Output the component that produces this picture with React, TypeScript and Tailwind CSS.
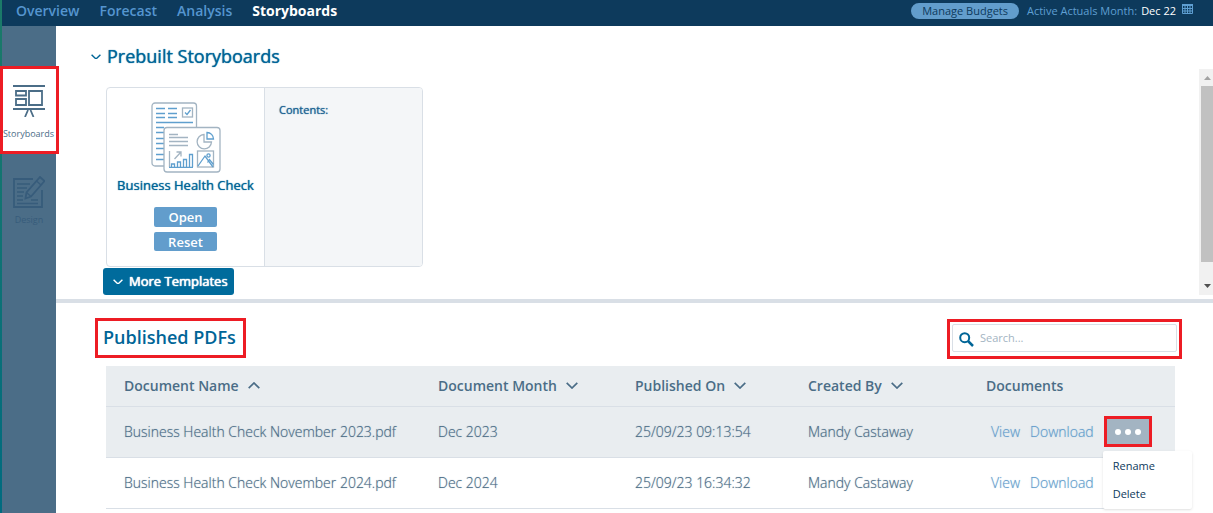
import type { ReactNode } from 'react'

const navItems = ['Overview', 'Forecast', 'Analysis', 'Storyboards']

const columns = [
  { label: 'Document Name', width: 'w-[314px]', sort: 'up' },
  { label: 'Document Month', width: 'w-[197px]', sort: 'down' },
  { label: 'Published On', width: 'w-[173px]', sort: 'down' },
  { label: 'Created By', width: 'w-[178px]', sort: 'down' },
  { label: 'Documents', width: '', sort: '' },
]

const documents = [
  { name: 'Business Health Check November 2023.pdf', month: 'Dec 2023', published: '25/09/23 09:13:54', author: 'Mandy Castaway', menuOpen: true },
  { name: 'Business Health Check November 2024.pdf', month: 'Dec 2024', published: '25/09/23 16:34:32', author: 'Mandy Castaway', menuOpen: false },
]

function Chevron({ up = false, className = '' }: { up?: boolean; className?: string }) {
  return (
    <svg viewBox="0 0 12 7" className={className} fill="none" stroke="currentColor" strokeWidth="1.7" aria-hidden="true">
      <path d={up ? 'M.7 6.2 6 1l5.3 5.2' : 'M.7.8 6 6 11.3.8'} />
    </svg>
  )
}

function Highlight({ children, className = '' }: { children: ReactNode; className?: string }) {
  return <div className={`border-3 border-[#ed1c24] ${className}`}>{children}</div>
}

function BoardIcon() {
  return (
    <svg width="32" height="32" viewBox="0 0 32 32" fill="none" stroke="#4b6d87" strokeWidth="1.8" aria-hidden="true">
      <path d="M0 1h32M0 24h32" strokeWidth="2" />
      <path d="M3 6h10v4.500H3zM3 14h10v6H3zM16 6h13v14H16z" />
      <path d="M15 25 12 32M17.500 25l3 7" />
    </svg>
  )
}

function DesignIcon() {
  return (
    <svg width="32" height="32" viewBox="0 0 32 32" fill="none" stroke="currentColor" strokeWidth="1.8" aria-hidden="true">
      <path d="M20 3H1v28h28V14" />
      <path d="M4 8h13M4 12h10M4 16h7M4 20h6M4 24h6M18 24h7M4 27.500h21" strokeWidth="1.5" />
      <path d="m12.500 22.500 1-6L27 1l4.500 4L18 20.500z" />
      <path d="m23.500 5 4.500 4M13.500 16.500l4.500 4" strokeWidth="1.3" />
    </svg>
  )
}

function ReportIcon() {
  return (
    <svg width="70" height="71" viewBox="0 0 70 71" fill="none" stroke="#a3b4c2" strokeWidth="1.3" aria-hidden="true">
      <rect x="1" y="1" width="44.500" height="63" rx="3" fill="#fff" />
      <path d="M5 6.500h9M17 6.500h9M5 11.500h9M17 11.500h9M5 15.500h9M17 15.500h9M5 20.500h37M5 25.500h8M5 30.500h8M5 36.500h8M5 41.500h8M5 46.500h8M5 52.500h8M5 57.500h8" stroke="#5f9fce" />
      <rect x="31.500" y="6" width="10" height="9" />
      <path d="m34 10.500 2 2L39.500 8" stroke="#5f9fce" />
      <rect x="13" y="25.500" width="56" height="44.500" rx="3" fill="#fff" />
      <path d="M18 32.500h9M18 35.500h19M18 39.500h19M18 43.500h19" />
      <path d="M53 32.500a7.200 7.200 0 1 0 7.500 7.500H53z" />
      <path d="M56 30.500v6.500h6.500a6.500 6.500 0 0 0-6.500-6.500z" stroke="#5f9fce" />
      <path d="M18.500 49v16M23.500 57l6-6.500M25.500 50h4.500v4.500" />
      <path d="M20.500 65v-3h3v3M26.500 65v-5h3v5M32.500 65v-7.500h3V65M38.500 65V52.500h3V65M18 65.300h24" stroke="#5f9fce" />
      <rect x="46.500" y="49" width="16" height="16" />
      <path d="m47 64 7-10 8 11M56.500 60.500l2-3 4 5" stroke="#5f9fce" />
      <circle cx="57.500" cy="53.500" r="1.600" stroke="#5f9fce" />
    </svg>
  )
}

function Header() {
  return (
    <header className="flex h-[26px] shrink-0 items-start justify-between bg-[#0d3a5c] pr-5 pl-3.5">
      <nav className="flex gap-5 text-sm leading-[22px] font-semibold">
        {navItems.map(item => (
          <a key={item} href="#" className={item === 'Storyboards' ? 'font-bold text-white' : 'text-[#5595cf]'}>{item}</a>
        ))}
      </nav>
      <div className="flex items-start text-[11px] leading-[22px] text-[#5f9fd2]">
        <button type="button" className="mt-[3px] mr-2 h-4 rounded-full bg-[#629dcc] px-[11px] leading-4 text-[#0d3a5c]">Manage Budgets</button>
        <span>Active Actuals Month:</span>
        <span className="ml-1 text-white">Dec 22</span>
        <button type="button" aria-label="Pick month" className="mt-1 ml-1.5">
          <svg width="11" height="10" viewBox="0 0 11 10" fill="none" stroke="#5f9fd2" aria-hidden="true">
            <path d="M0 1h11" strokeWidth="2" />
            <path d="M.5 0v9.500h10V0M0 4.500h11M0 7h11M3 2v8M5.500 2v8M8 2v8" />
          </svg>
        </button>
      </div>
    </header>
  )
}

function Sidebar() {
  return (
    <aside className="w-[54px] shrink-0 bg-[#4b6d87] pt-10 text-[9px] leading-3">
      <Highlight className="relative -ml-0.5 h-[88px] w-[59px] bg-white">
        <a href="#" className="flex flex-col items-center pt-4 pr-0.5 text-[#4b6d87]">
          <BoardIcon />
          <span className="mt-[11px]">Storyboards</span>
        </a>
      </Highlight>
      <a href="#" className="mt-[22px] flex flex-col items-center text-[#375c7b]">
        <DesignIcon />
        <span className="mt-1.5">Design</span>
      </a>
    </aside>
  )
}

function Prebuilt() {
  return (
    <section className="flex h-[277px] shrink-0 flex-col border-b-4 border-[#d9dfe6] pt-[18px]">
      <h2 className="flex items-center pl-[35px] text-lg leading-[25px] text-[#006597] [text-shadow:0_0_1px_currentColor]">
        <Chevron className="mr-1.5 w-2.5" />
        Prebuilt Storyboards
      </h2>
      <div className="flex min-h-0 flex-1 justify-between pb-1">
        <div className="pt-[18px] pl-[47px]">
          <article className="ml-[3px] flex h-[180px] w-[317px] overflow-hidden rounded border border-[#d9dfe6]">
            <div className="flex w-[158px] flex-col items-center border-r border-[#d9dfe6] pt-3.5">
              <ReportIcon />
              <h3 className="mt-[3px] text-[13px] leading-[18px] text-[#006597] [text-shadow:0_0_1px_currentColor]">Business Health Check</h3>
              <button type="button" className="mt-[13px] h-5 rounded-xs bg-[#629dcc] px-3.5 text-[13px] leading-[18px] font-semibold text-white">Open</button>
              <button type="button" className="mt-[5px] h-[19px] rounded-xs bg-[#629dcc] px-3.5 text-[13px] leading-[18px] font-semibold text-white">Reset</button>
            </div>
            <div className="flex-1 bg-[#f4f6f8] px-3.5 pt-3.5 text-[11px] leading-4 text-[#1d6494] [text-shadow:0_0_1px_currentColor]">Contents:</div>
          </article>
          <button type="button" className="mt-px flex h-[27px] items-center rounded-[3px] bg-[#006b9c] pr-1.5 pl-2.5 text-[13px] text-white [text-shadow:0_0_1px_currentColor,0_0_1px_currentColor]">
            <Chevron className="mr-1.5 w-2.5" />
            More Templates
          </button>
        </div>
        <div className="flex w-3.5 flex-col items-center bg-[#f1f1f1] pl-0.5">
          <svg width="7" height="4" viewBox="0 0 7 4" className="mt-[7px] mb-1.5 shrink-0 fill-[#a3a3a3]" aria-hidden="true"><path d="M0 4 3.500 0 7 4z" /></svg>
          <div className="h-[176px] w-full shrink-0 bg-[#c1c1c1]" />
          <svg width="7" height="4" viewBox="0 0 7 4" className="mt-[22px] shrink-0 fill-[#505050]" aria-hidden="true"><path d="M0 0h7L3.500 4z" /></svg>
        </div>
      </div>
    </section>
  )
}

function RowMenu() {
  return (
    <div className="absolute top-0 left-full ml-2.5">
      <Highlight>
        <button type="button" aria-label="More actions" className="flex h-[25px] w-[42px] items-center justify-center gap-1 bg-[#a3b4c2]">
          <span className="size-1.5 rounded-full bg-white" />
          <span className="size-1.5 rounded-full bg-white" />
          <span className="size-1.5 rounded-full bg-white" />
        </button>
      </Highlight>
      <div className="absolute top-full -left-px z-10 mt-1 w-[89px] rounded-xs bg-white py-px text-[11px] font-normal text-[#0d3a5c] shadow">
        <button type="button" className="block h-7 w-full pl-2.5 text-left">Rename</button>
        <button type="button" className="block h-7 w-full pl-2.5 text-left">Delete</button>
      </div>
    </div>
  )
}

function Published() {
  return (
    <section className="pt-[15px] pr-[38px] pl-[39px]">
      <div className="flex items-start justify-between">
        <Highlight className="h-10 pt-1 pr-[7px] pl-[5px]">
          <h2 className="text-lg leading-[25px] font-semibold text-[#006597]">Published PDFs</h2>
        </Highlight>
        <Highlight className="relative mt-px -mr-[7px] h-10 w-[235px] p-0.5">
          <label className="flex h-7 items-center rounded-xs border border-[#d9dfe6] pl-1.5">
            <svg width="15" height="15" viewBox="0 0 15 15" fill="none" stroke="#006597" className="mt-0.5 shrink-0" aria-hidden="true">
              <circle cx="5.700" cy="5.700" r="4.500" strokeWidth="2" />
              <path d="m9 9 5 5" strokeWidth="2.500" />
            </svg>
            <input type="search" aria-label="Search" placeholder="Search..." className="ml-1.5 w-full min-w-0 text-[11px] outline-none placeholder:text-[#a3b4c2]" />
          </label>
        </Highlight>
      </div>
      <div className="mt-[7px] pl-[11px]">
        <table className="w-full table-fixed text-left text-sm text-[#4b6d87]">
          <thead className="bg-[#e9edf0]">
            <tr className="h-10 border-b border-[#d9dfe6]">
              {columns.map(col => (
                <th key={col.label} className={`pl-[18px] font-semibold whitespace-nowrap ${col.width}`}>
                  {col.sort ? (
                    <button type="button" className="flex items-center">
                      {col.label}
                      <Chevron up={col.sort === 'up'} className="ml-2 w-3.5 px-px" />
                    </button>
                  ) : col.label}
                </th>
              ))}
            </tr>
          </thead>
          <tbody className="font-light whitespace-nowrap">
            {documents.map(doc => (
              <tr key={doc.name} className={`h-[51px] border-b border-[#d9dfe6] ${doc.menuOpen ? 'bg-[#e9edf0]' : 'bg-white'}`}>
                <td className="pl-[18px] [text-shadow:0_0_1px_#4b6d8799]">{doc.name}</td>
                <td className="pl-[18px] [text-shadow:0_0_1px_#4b6d8799]">{doc.month}</td>
                <td className="pl-[18px] [text-shadow:0_0_1px_#4b6d8799]">{doc.published}</td>
                <td className="pl-[18px] [text-shadow:0_0_1px_#4b6d8799]">{doc.author}</td>
                <td className="pl-[23px]">
                  <div className="relative flex h-[31px] w-fit items-center gap-2.5 text-[#629dcc]">
                    <a href="#" className="[text-shadow:0_0_1px_#629dcc99]">View</a>
                    <a href="#" className="[text-shadow:0_0_1px_#629dcc99]">Download</a>
                    {doc.menuOpen && <RowMenu />}
                  </div>
                </td>
              </tr>
            ))}
          </tbody>
        </table>
      </div>
    </section>
  )
}

export default function App() {
  return (
    <div className="flex min-h-screen bg-white font-['Open_Sans',sans-serif]">
      <div className="w-0.5 shrink-0 bg-linear-to-b from-[#1b7a68] to-[#006b80]" />
      <div className="flex min-w-0 flex-1 flex-col">
        <Header />
        <div className="flex flex-1">
          <Sidebar />
          <main className="min-w-0 flex-1">
            <Prebuilt />
            <Published />
          </main>
        </div>
      </div>
    </div>
  )
}
